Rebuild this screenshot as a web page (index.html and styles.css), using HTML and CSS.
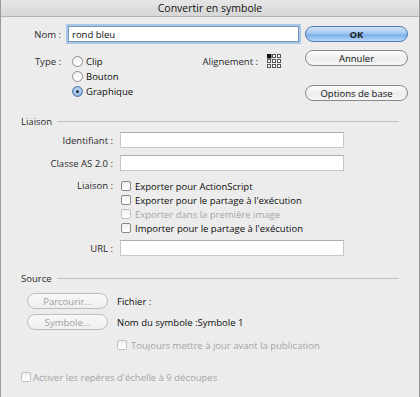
FILE: index.html
```html
<!DOCTYPE html>
<html lang="fr">
  <head>
    <meta charset="UTF-8" />
    <title>Convertir en symbole</title>
    <link rel="stylesheet" href="styles.css">
  </head>
  <body>
    <div class="window">
      <div class="titlebar">Convertir en symbole</div>

      <div class="top">
        <div class="top-left">
          <div class="nom-row">
            <span class="label">Nom :</span>
            <input class="field focus" type="text" value="rond bleu" />
          </div>
          <div class="type-row">
            <span class="label">Type :</span>
            <div class="radios">
              <div class="radio-line"><span class="radio"></span>Clip</div>
              <div class="radio-line"><span class="radio"></span>Bouton</div>
              <div class="radio-line"><span class="radio checked"></span>Graphique</div>
            </div>
            <div class="align">
              <span>Alignement :</span>
              <svg class="align-grid" width="14" height="15" viewBox="0 0 14 15">
                <rect x="0.5" y="0.5" width="3.5" height="3.5" fill="#111" stroke="#111" />
                <rect x="5.5" y="0.5" width="3" height="3" fill="#fff" stroke="#555" />
                <rect x="10.5" y="0.5" width="3" height="3" fill="#fff" stroke="#555" />
                <rect x="0.5" y="5.5" width="3" height="3" fill="#fff" stroke="#555" />
                <rect x="5.5" y="5.5" width="3" height="3" fill="#fff" stroke="#555" />
                <rect x="10.5" y="5.5" width="3" height="3" fill="#fff" stroke="#555" />
                <rect x="0.5" y="10.5" width="3" height="3" fill="#fff" stroke="#555" />
                <rect x="5.5" y="10.5" width="3" height="3" fill="#fff" stroke="#555" />
                <rect x="10.5" y="10.5" width="3" height="3" fill="#fff" stroke="#555" />
              </svg>
            </div>
          </div>
        </div>
        <div class="top-right">
          <button class="btn default">OK</button>
          <button class="btn cancel">Annuler</button>
          <button class="btn options">Options de base</button>
        </div>
      </div>

      <div class="section liaison">
        <div class="section-title"><span>Liaison</span><div class="rule"></div></div>
        <div class="fields">
          <span class="flabel first">Identifiant :</span>
          <input class="field wide first" type="text" />
          <span class="flabel">Classe AS 2.0 :</span>
          <input class="field wide" type="text" />
          <span class="flabel checks-label">Liaison :</span>
          <div class="checks">
            <div class="check-line"><span class="box"></span>Exporter pour ActionScript</div>
            <div class="check-line"><span class="box"></span>Exporter pour le partage à l'exécution</div>
            <div class="check-line disabled"><span class="box"></span>Exporter dans la première image</div>
            <div class="check-line"><span class="box"></span>Importer pour le partage à l'exécution</div>
          </div>
          <span class="flabel url-label">URL :</span>
          <input class="field wide url" type="text" />
        </div>
      </div>

      <div class="section source">
        <div class="section-title"><span>Source</span><div class="rule"></div></div>
        <div class="source-row">
          <button class="btn small" disabled>Parcourir...</button>
          <span>Fichier :</span>
        </div>
        <div class="source-row second">
          <button class="btn small" disabled>Symbole...</button>
          <span>Nom du symbole :Symbole 1</span>
        </div>
        <div class="check-line disabled update"><span class="box"></span>Toujours mettre à jour avant la publication</div>
        <div class="check-line disabled scale"><span class="box"></span>Activer les repères d'échelle à 9 découpes</div>
      </div>
    </div>
  </body>
</html>
```

FILE: styles.css
```css
html,
body {
  margin: 0;
  padding: 0;
}
body {
  font-family: "Open Sans", "DejaVu Sans", sans-serif;
  font-size: 9.5px;
  color: #0d0d0d;
  background-color: #ececec;
}

.window {
  width: 420px;
  height: 397px;
  box-sizing: border-box;
  border-left: 1px solid #9a9a9a;
  border-right: 1px solid #9a9a9a;
  background-color: #ececec;
  overflow: hidden;
}
.titlebar {
  height: 17px;
  line-height: 16px;
  text-align: center;
  font-size: 10.5px;
  color: #111;
  background: linear-gradient(#e6e6e6, #d6d6d6);
  border-bottom: 1px solid #b3b3b3;
  box-sizing: border-box;
}

/* top block */
.top {
  display: flex;
  padding: 9px 11px 0 0;
}
.top-left {
  flex: 1;
}
.top-right {
  width: 103px;
  margin-left: 6px;
  display: flex;
  flex-direction: column;
}
.label {
  width: 60px;
  flex: none;
  text-align: right;
  color: #2a2a2a;
}
.nom-row {
  display: flex;
  align-items: center;
  height: 16px;
}
.nom-row .field {
  margin-left: 7px;
  flex: 1;
}
.field {
  height: 16px;
  box-sizing: border-box;
  border: 1px solid #c8c8c8;
  border-top-color: #acacac;
  background: white;
  font-family: inherit;
  font-size: 9.5px;
  color: #0d0d0d;
  padding: 0 3px;
  margin: 0;
  outline: none;
}
.field.focus {
  border-color: #7d95b5;
  box-shadow: 0 0 0 2px #a9c6ea;
}
.type-row {
  display: flex;
  margin-top: 12px;
  line-height: 15px;
}
.radios {
  margin-left: 11px;
}
.radio-line {
  display: flex;
  align-items: center;
  height: 15px;
}
.radio {
  width: 11px;
  height: 11px;
  box-sizing: border-box;
  border-radius: 50%;
  border: 1px solid #8c8c8c;
  background: linear-gradient(#f1f1f1, #ffffff);
  margin-right: 3px;
  position: relative;
}
.radio.checked {
  border-color: #50739e;
  background: radial-gradient(circle at 50% 40%, #cfe4fa, #6fa3dc);
}
.radio.checked::after {
  content: "";
  position: absolute;
  left: 3px;
  top: 3px;
  width: 3px;
  height: 3px;
  border-radius: 50%;
  background: #1b2a3c;
}
.align {
  margin-left: auto;
  margin-right: 18px;
  display: flex;
  align-items: flex-start;
  color: #2a2a2a;
}
.align-grid {
  margin-left: 9px;
}

/* aqua buttons */
.btn {
  height: 16px;
  box-sizing: border-box;
  border: 1px solid #888;
  border-radius: 8px;
  background: linear-gradient(#ffffff, #ececec 55%, #f7f7f7);
  font-family: inherit;
  font-size: 9.5px;
  color: #111;
  padding: 0;
  line-height: 13px;
}
.btn.default {
  border-color: #4f7bb0;
  background: linear-gradient(#d3e6fa, #9cc4ee 50%, #79aee8 55%, #b6d8fb);
  font-weight: bold;
  color: #1a1a1a;
}
.btn.cancel {
  margin-top: 8px;
}
.btn.options {
  margin-top: 19px;
}
.btn:disabled {
  border-color: #bdbdbd;
  color: #a0a0a0;
  background: linear-gradient(#f8f8f8, #efefef);
}

/* sections */
.section {
  padding: 0 20px;
}
.liaison {
  margin-top: 13px;
}
.source {
  margin-top: 15px;
}
.section-title {
  display: flex;
  align-items: center;
  height: 14px;
  color: #2a2a2a;
}
.rule {
  flex: 1;
  height: 1px;
  background-color: #bebebe;
  margin-left: 5px;
}
.fields {
  display: grid;
  grid-template-columns: 92px 224px;
  column-gap: 7px;
  align-items: center;
}
.flabel {
  text-align: right;
  color: #2a2a2a;
  margin-top: 7px;
}
.fields .field {
  margin-top: 7px;
}
.flabel.first,
.fields .field.first {
  margin-top: 4px;
}
.flabel.checks-label {
  align-self: start;
  margin-top: 8px;
  line-height: 14px;
}
.checks {
  margin-top: 8px;
}
.flabel.url-label,
.fields .field.url {
  margin-top: 5px;
}
.check-line {
  display: flex;
  align-items: center;
  height: 14px;
}
.box {
  width: 10px;
  height: 10px;
  box-sizing: border-box;
  border: 1px solid #8a8a8a;
  border-radius: 2px;
  background: linear-gradient(#f0f0f0, #ffffff);
  margin: 0 4px 0 1px;
}
.check-line.disabled {
  color: #a5a5a5;
}
.check-line.disabled .box {
  border-color: #c2c2c2;
}
.source-row {
  display: flex;
  align-items: center;
  margin-top: 8px;
}
.source-row.second {
  margin-top: 5px;
}
.btn.small {
  width: 81px;
  margin: 0 9px 0 6px;
}
.check-line.update {
  margin: 8px 0 0 95px;
}
.check-line.scale {
  margin-top: 18px;
}
.check-line.scale .box {
  margin-left: 0;
  margin-right: 2px;
}
```
